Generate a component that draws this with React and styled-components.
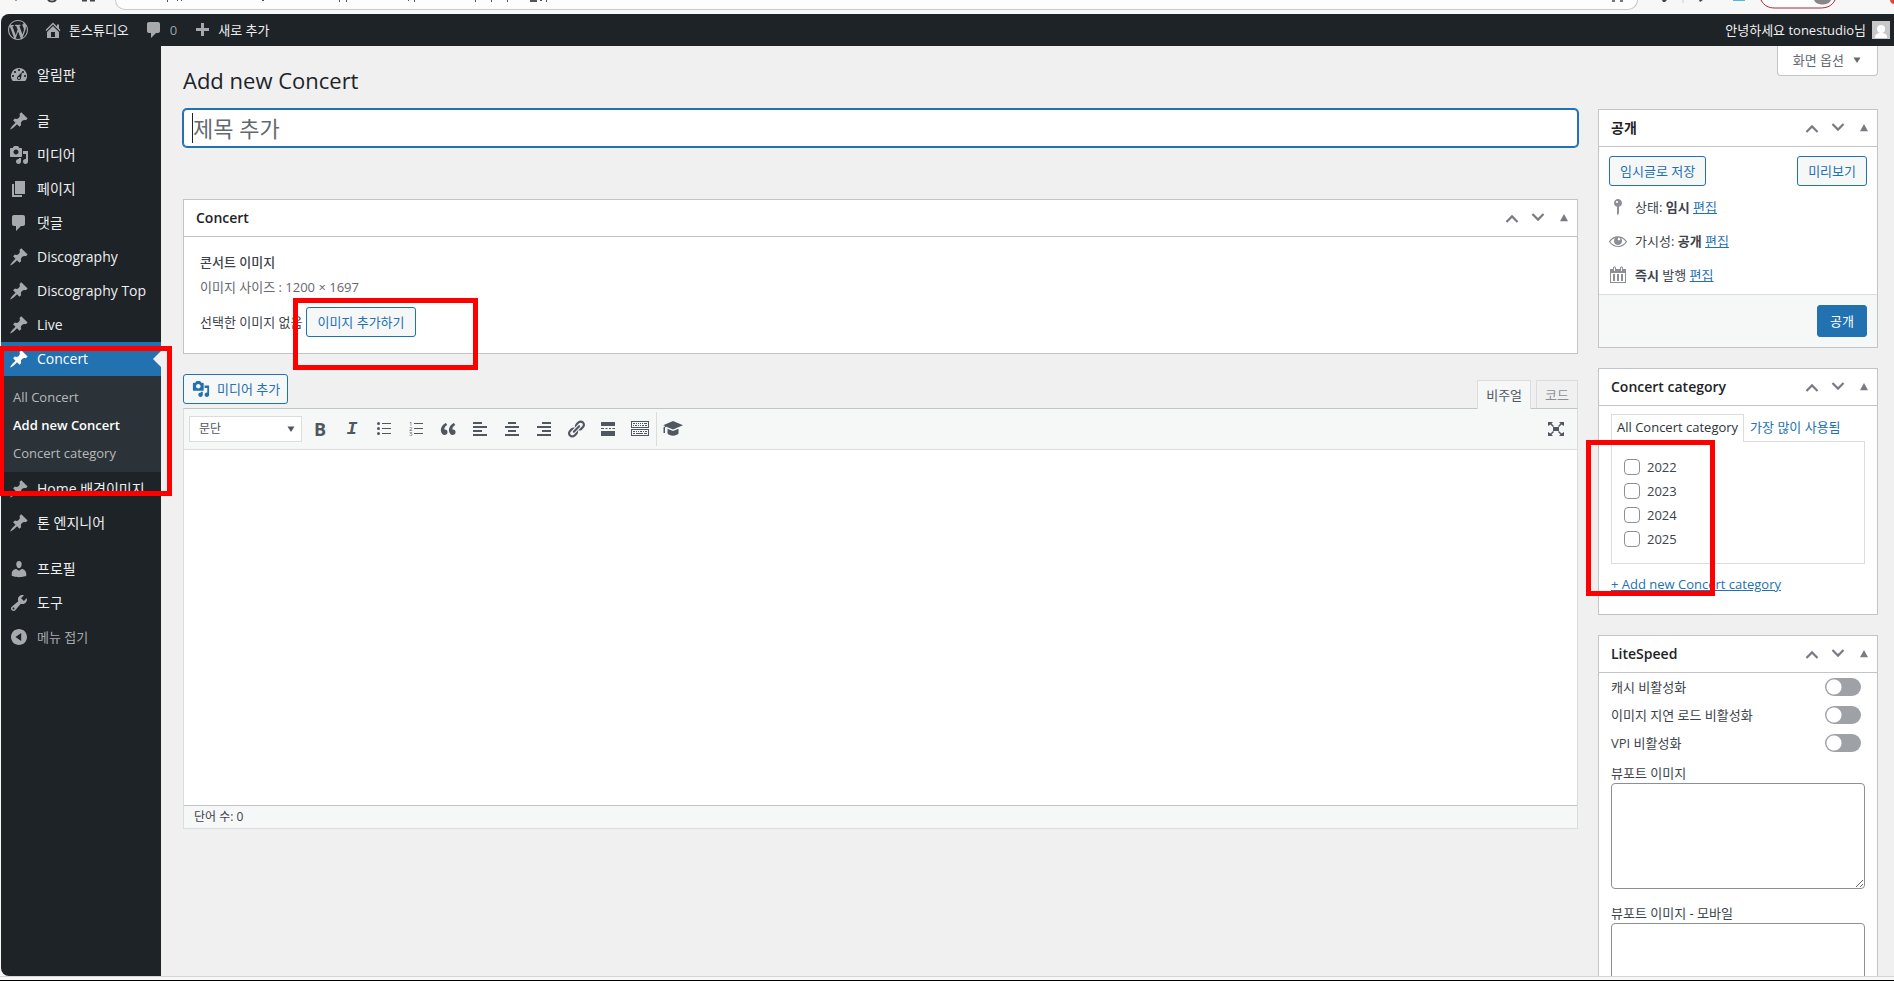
import React from 'react';
import styled, { createGlobalStyle, css } from 'styled-components';

const PATHS = {
    wordpress: 'M20 10c0-5.51-4.49-10-10-10C4.48 0 0 4.49 0 10c0 5.52 4.48 10 10 10 5.51 0 10-4.48 10-10zM7.78 15.37L4.37 6.22c.55-.02 1.17-.08 1.17-.08.5-.06.44-1.13-.06-1.11 0 0-1.45.11-2.37.11-.18 0-.37 0-.58-.01C4.12 2.69 6.87 1.11 10 1.11c2.33 0 4.45.87 6.05 2.34-.68-.11-1.65.39-1.65 1.58 0 .74.45 1.36.9 2.1.35.61.55 1.36.55 2.46 0 1.49-1.4 5-1.4 5l-3.03-8.37c.54-.02.82-.17.82-.17.5-.05.44-1.25-.06-1.22 0 0-1.44.12-2.38.12-.87 0-2.33-.12-2.33-.12-.5-.03-.56 1.2-.06 1.22l.92.08 1.26 3.41zM17.41 10c.24-.64.74-1.87.43-4.25.7 1.29 1.05 2.71 1.05 4.25 0 3.29-1.73 6.24-4.4 7.78.97-2.59 1.94-5.2 2.92-7.78zM6.1 18.09C3.12 16.65 1.11 13.53 1.11 10c0-1.3.23-2.48.72-3.59C3.25 10.3 4.67 14.2 6.1 18.09zm4.03-6.63l2.58 6.98c-.86.29-1.76.45-2.71.45-.79 0-1.57-.11-2.29-.33.81-2.38 1.62-4.74 2.42-7.1z',
    home: 'M16 8.5l1.53 1.53-1.06 1.06L10 4.6l-6.47 6.49-1.06-1.06L10 2.5l4 4v-2h2v4zm-6-2.46l6 5.99V18H4v-5.97zM12 17v-5H8v5h4z',
    comment: 'M5 2h9c1.1 0 2 .9 2 2v7c0 1.1-.9 2-2 2h-2l-5 5v-5H5c-1.1 0-2-.9-2-2V4c0-1.1.9-2 2-2z',
    plus: 'M17 8v3h-5v5H9v-5H4V8h5V3h3v5h5z',
    dashboard: 'M3.76 16h12.48A7.998 7.998 0 0 0 10 3a7.998 7.998 0 0 0-6.24 13zM10 4c.55 0 1 .45 1 1s-.45 1-1 1-1-.45-1-1 .45-1 1-1zM6 6c.55 0 1 .45 1 1s-.45 1-1 1-1-.45-1-1 .45-1 1-1zm8 0c.55 0 1 .45 1 1s-.45 1-1 1-1-.45-1-1 .45-1 1-1zm-5.37 5.55L13 7l-1 6c0 1.1-.9 2-2 2s-2-.9-2-2c0-.57.24-1.08.63-1.45zM4 10c.55 0 1 .45 1 1s-.45 1-1 1-1-.45-1-1 .45-1 1-1zm12 0c.55 0 1 .45 1 1s-.45 1-1 1-1-.45-1-1 .45-1 1-1zm-5 3c0-.55-.45-1-1-1s-1 .45-1 1 .45 1 1 1 1-.45 1-1z',
    pin: 'M10.44 3.02l1.82-1.82 6.36 6.35-1.83 1.82c-1.05-.68-2.48-.57-3.41.36l-.75.75c-.92.93-1.04 2.35-.35 3.41l-1.83 1.82-2.41-2.41-2.8 2.79c-.42.42-3.38 2.71-3.8 2.29s1.86-3.39 2.28-3.81l2.79-2.79L4.1 9.36l1.83-1.82c1.05.69 2.48.57 3.4-.36l.75-.75c.93-.92 1.05-2.35.36-3.41z',
    media: 'M13 11V4c0-.55-.45-1-1-1h-1.67L9 1H5L3.67 3H2c-.55 0-1 .45-1 1v7c0 .55.45 1 1 1h10c.55 0 1-.45 1-1zM7 4.5c1.38 0 2.5 1.12 2.5 2.5S8.38 9.5 7 9.5 4.5 8.38 4.5 7 5.62 4.5 7 4.5zM14 6h5v10.5c0 1.38-1.12 2.5-2.5 2.5S14 17.88 14 16.5s1.12-2.5 2.5-2.5c.17 0 .34.02.5.05V9h-3V6zm-4 8.05V13h2v3.5c0 1.38-1.12 2.5-2.5 2.5S7 17.88 7 16.5 8.12 14 9.5 14c.17 0 .34.02.5.05z',
    page: 'M6 15V2h10v13zM3 5h2v11h8v2H3z',
    user: 'M10 9.25c-2.27 0-2.73-3.44-2.73-3.44C7 4.02 7.82 2 9.97 2c2.16 0 2.98 2.02 2.71 3.81 0 0-.41 3.44-2.68 3.44zm0 2.57L12.72 10c2.39 0 4.52 2.33 4.52 4.53v2.49s-3.65 1.13-7.24 1.13c-3.65 0-7.24-1.13-7.24-1.13v-2.49c0-2.25 1.94-4.48 4.47-4.48z',
    tools: 'M16.68 9.77c-1.34 1.34-3.3 1.67-4.95.99l-5.41 6.52c-.99.99-2.59.99-3.58 0s-.99-2.59 0-3.57l6.52-5.42c-.68-1.65-.35-3.61.99-4.95 1.28-1.28 3.12-1.62 4.72-1.06l-2.89 2.89 2.82 2.82 2.86-2.87c.53 1.58.18 3.39-1.08 4.65zM3.81 16.21c.4.39 1.04.39 1.43 0 .4-.4.4-1.04 0-1.43-.39-.4-1.03-.4-1.43 0-.39.39-.39 1.03 0 1.43z',
    collapse: 'M10 2c4.42 0 8 3.58 8 8s-3.58 8-8 8-8-3.58-8-8 3.58-8 8-8zm2.2 12V6l-5.7 4z',
    status: 'M14 6c0 1.86-1.28 3.41-3 3.86V16c0 1-2 2-2 2V9.86c-1.72-.45-3-2-3-3.86 0-2.21 1.79-4 4-4s4 1.79 4 4zM8 5c0 .55.45 1 1 1s1-.45 1-1-.45-1-1-1-1 .45-1 1z',
    eye: 'M18.3 9.5C15 4.9 8.5 3.8 3.9 7.2c-1.2.9-2.2 2.1-3 3.4.2.4.5.8.8 1.2 3.3 4.6 9.6 5.6 14.2 2.4.9-.7 1.7-1.4 2.4-2.4.3-.4.5-.8.8-1.2-.3-.4-.5-.8-.8-1.1zm-8.2-2.3c.5-.5 1.3-.5 1.8 0s.5 1.3 0 1.8-1.3.5-1.8 0-.5-1.3 0-1.8zm-.1 7.7c-3.1 0-6-1.6-7.7-4.2C3.5 9 5.1 7.8 7 7.2c-.7.8-1 1.7-1 2.7 0 2.2 1.7 4.1 4 4.1 2.2 0 4.1-1.7 4.1-4v-.1c0-1-.4-2-1.1-2.7 1.9.6 3.5 1.8 4.7 3.5-1.7 2.6-4.6 4.2-7.7 4.2z',
    calendar: 'M15 4h3v14H2V4h3V3c0-.83.67-1.5 1.5-1.5S8 2.17 8 3v1h4V3c0-.83.67-1.5 1.5-1.5S15 2.17 15 3v1zM6 3v2.5a.5.5 0 0 0 1 0V3a.5.5 0 0 0-1 0zm7 0v2.5a.5.5 0 0 0 1 0V3a.5.5 0 0 0-1 0zm4 14V8H3v9h14zM7 16V9H5v7h2zm4 0V9H9v7h2zm4 0V9h-2v7h2z',
    quote: 'M9.49 13.22c0-.74-.2-1.38-.61-1.9-.62-.78-1.83-.88-2.53-.72-.29-1.65 1.11-3.75 2.92-4.65L7.88 4c-2.73 1.3-5.42 4.28-4.96 8.05C3.21 14.43 4.59 16 6.54 16c.85 0 1.56-.25 2.12-.75s.83-1.18.83-2.03zm8.05 0c0-.74-.2-1.38-.61-1.9-.63-.78-1.83-.88-2.53-.72-.29-1.65 1.11-3.75 2.92-4.65L15.93 4c-2.73 1.3-5.41 4.28-4.95 8.05.29 2.38 1.66 3.95 3.61 3.95.85 0 1.56-.25 2.12-.75s.83-1.18.83-2.03z',
    bullets: 'M3 4.5a1.500 1.500 0 1 1 3 0 1.500 1.500 0 1 1-3 0zM8 4h9v1H8zM3 9.500a1.500 1.500 0 1 1 3 0 1.500 1.500 0 1 1-3 0zM8 9h9v1H8zM3 14.500a1.500 1.500 0 1 1 3 0 1.500 1.500 0 1 1-3 0zM8 14h9v1H8z',
    alignLeft: 'M12 5V3H3v2h9zm5 4V7H3v2h14zm-5 4v-2H3v2h9zm5 4v-2H3v2h14z',
    alignCenter: 'M14 5V3H6v2h8zm3 4V7H3v2h14zm-3 4v-2H6v2h8zm3 4v-2H3v2h14z',
    alignRight: 'M17 5V3H8v2h9zm0 4V7H3v2h14zm0 4v-2H8v2h9zm0 4v-2H3v2h14z',
    link: 'M17.74 2.76c1.68 1.69 1.68 4.41 0 6.1l-1.53 1.52c-1.12 1.12-2.7 1.47-4.14 1.09l2.62-2.61.76-.77.76-.76c.84-.84.84-2.2 0-3.04-.84-.85-2.2-.85-3.04 0l-.77.76-3.38 3.38c-.37-1.44-.02-3.02 1.1-4.14l1.52-1.53c1.69-1.68 4.42-1.68 6.1 0zM8.59 13.43l5.34-5.34c.42-.42.42-1.1 0-1.52-.44-.43-1.13-.39-1.53 0l-5.33 5.34c-.42.42-.42 1.1 0 1.52.44.43 1.13.39 1.52 0zm-.76 2.29l4.14-4.15c.38 1.44.03 3.02-1.09 4.14l-1.52 1.53c-1.69 1.68-4.41 1.68-6.1 0-1.68-1.68-1.68-4.42 0-6.1l1.53-1.52c1.12-1.12 2.7-1.47 4.14-1.1l-4.14 4.15c-.85.84-.85 2.2 0 3.05.84.84 2.2.84 3.04 0z',
    more: 'M3 3h14v4H3zM3 9h3v1H3zM7.500 9h2v1h-2zM11 9h2v1h-2zM14.500 9H17v1h-2.500zM3 12h14v5H3z',
    keyboard: 'M1 2h18v7H1zm1 1v5h16V3zM1 10h18v7H1zm1 1v5h16v-5zM3 4h2v1H3zM6 4h1v1H6zM8 4h1v1H8zM10 4h1v1h-1zM12 4h1v1h-1zM14 4h3v1h-3zM3 6h1v1H3zM5 6h2v1H5zM8 6h1v1H8zM10 6h1v1h-1zM12 6h2v1h-2zM15 6h2v1h-2zM3 12h2v1H3zM6 12h1v1H6zM8 12h1v1H8zM10 12h2v1h-2zM13 12h1v1h-1zM15 12h2v1h-2zM3 14h2v1H3zM6 14h7v1H6zM14 14h3v1h-3z',
    cap: 'M10 2l10 4.200-10 4.300-6.600-2.800L2 8.500V14H.500V8.500L2.400 6.900.200 6.200zM4.500 9.800L10 12.100l5.500-2.300v4.700c-1.200 1.400-3.100 2.200-5.500 2.200s-4.300-.8-5.500-2.200z',
    expand: 'M7 8h6v4H7zM2 3h5L5.500 4.500 8 7 7 8 4.500 5.500 2 7zM18 3v4l-2.500-1.500L13 8l-1-1 2.500-2.500L13 3zM2 17v-4l2.500 1.500L7 12l1 1-2.500 2.500L7 17zM18 17h-5l1.500-1.500L12 13l1-1 2.500 2.500L18 13z',
    up: 'M3 13.500l7-7 7 7-1.700 1.700L10 9.900l-5.300 5.300z',
    down: 'M3 6.500l7 7 7-7-1.700-1.700L10 10.100 4.700 4.800z',
    triUp: 'M5 14l5-9 5 9z',
    triDown: 'M3 5h14l-7 11z',
};

const Icon = ({ name, size = 20 }) => (
    <svg width={size} height={size} viewBox="0 0 20 20" fill="currentColor" fillRule="evenodd" aria-hidden="true">
        <path d={PATHS[name]} />
    </svg>
);

const NumberedIcon = () => (
    <svg width="20" height="20" viewBox="0 0 20 20" fill="currentColor" aria-hidden="true">
        <path d="M8 4h9v1H8zM8 9h9v1H8zM8 14h9v1H8z" />
        <text x="3" y="7" fontSize="6">1</text>
        <text x="3" y="12" fontSize="6">2</text>
        <text x="3" y="17" fontSize="6">3</text>
    </svg>
);

const MENU = [
    { icon: 'dashboard', label: '알림판' },
    { icon: 'pin', label: '글', separated: true },
    { icon: 'media', label: '미디어' },
    { icon: 'page', label: '페이지' },
    { icon: 'comment', label: '댓글' },
    { icon: 'pin', label: 'Discography' },
    { icon: 'pin', label: 'Discography Top' },
    { icon: 'pin', label: 'Live' },
    { icon: 'pin', label: 'Concert', current: true, children: ['All Concert', 'Add new Concert', 'Concert category'] },
    { icon: 'pin', label: 'Home 배경이미지' },
    { icon: 'pin', label: '톤 엔지니어' },
    { icon: 'user', label: '프로필', separated: true },
    { icon: 'tools', label: '도구' },
];

const TOOLS = [
    { label: '굵게', glyph: <BoldGlyph /> },
    { label: '기울임꼴', glyph: <ItalicGlyph /> },
    { label: '글머리 기호 목록', icon: 'bullets' },
    { label: '번호 목록', glyph: <NumberedIcon /> },
    { label: '인용', icon: 'quote' },
    { label: '왼쪽 정렬', icon: 'alignLeft' },
    { label: '가운데 정렬', icon: 'alignCenter' },
    { label: '오른쪽 정렬', icon: 'alignRight' },
    { label: '링크', icon: 'link' },
    { label: '더보기 태그', icon: 'more' },
    { label: '툴바 전환', icon: 'keyboard' },
];

function BoldGlyph() {
    return <Letter>B</Letter>;
}

function ItalicGlyph() {
    return <Letter $italic>I</Letter>;
}

const Postbox = ({ title, children }) => (
    <Box>
        <BoxHeader>
            <h2>{title}</h2>
            <div>
                <button type="button" aria-label={`${title} 위로 이동`}><Icon name="up" size={18} /></button>
                <button type="button" aria-label={`${title} 아래로 이동`}><Icon name="down" size={18} /></button>
                <button type="button" aria-label={`${title} 패널 토글`}><Icon name="triUp" size={16} /></button>
            </div>
        </BoxHeader>
        {children}
    </Box>
);

const BrowserBar = () => (
    <Browser>
        <svg width="115" height="14" viewBox="0 0 115 14" fill="none" stroke="#444" aria-hidden="true">
            <path d="M48 0c2 2 6 2 8 0M82 .500h5M90 .500h5" strokeWidth="2" />
            <path d="M15 0h2" />
        </svg>
        <Address>
            <svg width="460" height="3" viewBox="0 0 460 3" fill="#555" aria-hidden="true">
                <path d="M51 0h1v2h-1zM61 0h1v1h-1zM65 0h1v1h-1zM146 0h2v1h-2zM223 0h1v2h-1zM230 0h1v2h-1zM292 0h1v1h-1zM298 0h1v2h-1zM359 0h1v2h-1zM375 0h1v2h-1zM391 0h1v2h-1zM414 0h7v2h-7zM424 0h2v1h-2zM430 0h1v2h-1z" />
            </svg>
            <svg width="14" height="3" viewBox="0 0 14 3" fill="#777" aria-hidden="true">
                <path d="M1 0h3v2H1zM9 0h3v2H9z" />
            </svg>
        </Address>
        <svg width="256" height="14" viewBox="0 0 256 14" aria-hidden="true">
            <path d="M24 0h5l-2 2h-2zM61 0h4l-3 2z" fill="#444" />
            <path d="M45 0v3" stroke="#ccc" />
            <path d="M95 0h12v1H95z" fill="#4cbbe0" />
            <path d="M123 0c3 6 8 8 14 8h45c7 0 12-2 15-8" fill="#fdfdfd" stroke="#b32638" />
            <path d="M176 0h17c-2 6-15 6-17 0z" fill="#8b8585" />
            <path d="M252 0h4v4c-2 0-4-2-4-4z" fill="#e8452c" />
        </svg>
    </Browser>
);

export default function App() {
    return (
        <Screen>
            <GlobalStyle />
            <BrowserBar />
            <Admin>
                <AdminBar>
                    <BarLink href="#about" aria-label="WordPress"><Icon name="wordpress" /></BarLink>
                    <BarLink href="#site"><Icon name="home" />톤스튜디오</BarLink>
                    <BarLink href="#comments" $muted><Icon name="comment" />0</BarLink>
                    <BarLink href="#new"><Icon name="plus" />새로 추가</BarLink>
                    <Account href="#profile">
                        안녕하세요 tonestudio님
                        <svg width="18" height="18" viewBox="0 0 18 18" aria-hidden="true">
                            <path d="M0 0h18v18H0z" fill="#c8c8c8" />
                            <circle cx="9" cy="8" r="4" fill="#fff" />
                            <path d="M3 17c0-4 2-5 6-5s6 1 6 5z" fill="#fff" />
                        </svg>
                    </Account>
                </AdminBar>
                <Body>
                    <Sidebar aria-label="주 메뉴">
                        {MENU.map((item) => (
                            <React.Fragment key={item.label}>
                                <MenuLink href="#menu" $current={item.current} $separated={item.separated}>
                                    <Icon name={item.icon} />
                                    <span>{item.label}</span>
                                </MenuLink>
                                {item.children && (
                                    <Submenu>
                                        {item.children.map((child) => (
                                            <SubLink href="#submenu" key={child} $active={child === 'Add new Concert'}>{child}</SubLink>
                                        ))}
                                    </Submenu>
                                )}
                            </React.Fragment>
                        ))}
                        <CollapseButton type="button"><Icon name="collapse" /><span>메뉴 접기</span></CollapseButton>
                    </Sidebar>

                    <Content>
                        <PageHeader>
                            <h1>Add new Concert</h1>
                            <ScreenOptions type="button">화면 옵션 <Icon name="triDown" size={10} /></ScreenOptions>
                        </PageHeader>
                        <Columns>
                            <MainColumn>
                                <TitleField>
                                    <Caret />
                                    <input type="text" aria-label="제목 추가" placeholder="제목 추가" />
                                </TitleField>
                                <Postbox title="Concert">
                                    <ImageField>
                                        <strong>콘서트 이미지</strong>
                                        <p>이미지 사이즈 : 1200 × 1697</p>
                                        <div>선택한 이미지 없음 <Button type="button">이미지 추가하기</Button></div>
                                    </ImageField>
                                </Postbox>
                                <EditorTop>
                                    <Button type="button" $withIcon><Icon name="media" size={18} />미디어 추가</Button>
                                    <EditorTabs>
                                        <EditorTab type="button" $active>비주얼</EditorTab>
                                        <EditorTab type="button">코드</EditorTab>
                                    </EditorTabs>
                                </EditorTop>
                                <Editor>
                                    <Toolbar>
                                        <FormatSelect>
                                            <select aria-label="문단 형식"><option>문단</option></select>
                                            <Icon name="triDown" size={10} />
                                        </FormatSelect>
                                        <ToolGroup>
                                            {TOOLS.map((tool) => (
                                                <ToolButton type="button" key={tool.label} aria-label={tool.label}>
                                                    {tool.glyph || <Icon name={tool.icon} />}
                                                </ToolButton>
                                            ))}
                                        </ToolGroup>
                                        <LastTools>
                                            <ToolButton type="button" aria-label="강의"><Icon name="cap" /></ToolButton>
                                            <ToolButton type="button" aria-label="전체 화면"><Icon name="expand" /></ToolButton>
                                        </LastTools>
                                    </Toolbar>
                                    <EditorArea aria-label="본문" />
                                    <StatusBar>단어 수: 0</StatusBar>
                                </Editor>
                            </MainColumn>

                            <SideColumn>
                                <Postbox title="공개">
                                    <PublishActions>
                                        <Button type="button">임시글로 저장</Button>
                                        <Button type="button">미리보기</Button>
                                    </PublishActions>
                                    <PublishRow><Icon name="status" /><span>상태: <b>임시</b> <a href="#status">편집</a></span></PublishRow>
                                    <PublishRow><Icon name="eye" /><span>가시성: <b>공개</b> <a href="#visibility">편집</a></span></PublishRow>
                                    <PublishRow><Icon name="calendar" /><span><b>즉시</b> 발행 <a href="#date">편집</a></span></PublishRow>
                                    <PublishFooter>
                                        <Button type="submit" $primary>공개</Button>
                                    </PublishFooter>
                                </Postbox>
                                <Postbox title="Concert category">
                                    <CategoryBody>
                                        <CategoryTabs>
                                            <CategoryTab href="#all" $active>All Concert category</CategoryTab>
                                            <CategoryTab href="#popular">가장 많이 사용됨</CategoryTab>
                                        </CategoryTabs>
                                        <CategoryPanel>
                                            {['2022', '2023', '2024', '2025'].map((year) => (
                                                <label key={year}><input type="checkbox" />{year}</label>
                                            ))}
                                        </CategoryPanel>
                                        <AddLink href="#add">+ Add new Concert category</AddLink>
                                    </CategoryBody>
                                </Postbox>
                                <Postbox title="LiteSpeed">
                                    <LiteSpeedBody>
                                        {['캐시 비활성화', '이미지 지연 로드 비활성화', 'VPI 비활성화'].map((text) => (
                                            <SwitchRow key={text}>{text}<input type="checkbox" role="switch" /></SwitchRow>
                                        ))}
                                        <AreaField>뷰포트 이미지<textarea /></AreaField>
                                        <AreaField>뷰포트 이미지 - 모바일<textarea /></AreaField>
                                    </LiteSpeedBody>
                                </Postbox>
                            </SideColumn>
                        </Columns>
                    </Content>
                </Body>
            </Admin>
            <BottomEdge />
            <Marker $left={-1} $top={346} $width={173} $height={150} />
            <Marker $left={293} $top={298} $width={185} $height={72} />
            <Marker $left={1586} $top={440} $width={129} $height={156} />
        </Screen>
    );
}

const GlobalStyle = createGlobalStyle`
    *{
        box-sizing: border-box;
    }
    body{
        margin: 0;
        overflow: hidden;
        background: #F7F7F7;
        color: #3C434A;
        font-family: "Open Sans", "Noto Sans CJK KR", sans-serif;
        font-size: 13px;
        line-height: 20px;
    }
    button, input, select, textarea{
        font: inherit;
    }
    svg{
        display: block;
        flex: none;
    }
    h1, h2, p{
        margin: 0;
    }
    a{
        color: #2271B1;
    }
`;

const Screen = styled.div`
    position: relative;
    height: 100vh;
    display: flex;
    flex-direction: column;
    overflow: hidden;
`;

const Browser = styled.div`
    height: 14px;
    flex: none;
    display: flex;
    background: #F7F7F7;
`;

const Address = styled.div`
    flex: 1;
    height: 10px;
    display: flex;
    justify-content: space-between;
    padding-right: 12px;
    background: #FDFDFD;
    border: 1px solid #C9C9C9;
    border-top: none;
    border-radius: 0 0 14px 14px;
`;

const Admin = styled.div`
    flex: 1;
    min-height: 0;
    margin-left: 1px;
    display: flex;
    flex-direction: column;
    overflow: hidden;
    background: #F0F0F1;
    border-radius: 8px 0 0 8px;
`;

const AdminBar = styled.header`
    height: 32px;
    flex: none;
    display: flex;
    gap: 15px;
    padding: 0 4px 0 7px;
    background: #1D2327;
`;

const BarLink = styled.a`
    display: flex;
    align-items: center;
    gap: 6px;
    color: ${({ $muted }) => ($muted ? '#9CA2A7' : '#F0F0F1')};
    text-decoration: none;
    svg{
        color: #A7AAAD;
    }
`;

const Account = styled(BarLink)`
    margin-left: auto;
`;

const Body = styled.div`
    flex: 1;
    min-height: 0;
    display: flex;
`;

const Sidebar = styled.nav`
    width: 160px;
    flex: none;
    padding-top: 12px;
    background: #1D2327;
`;

const menuItem = css`
    width: 100%;
    height: 34px;
    display: flex;
    align-items: center;
    gap: 8px;
    padding: 0 8px;
    color: #F0F0F1;
    font-size: 14px;
    text-decoration: none;
    white-space: nowrap;
    svg{
        color: #A7AAAD;
    }
`;

const MenuLink = styled.a`
    ${menuItem}
    margin-top: ${({ $separated }) => ($separated ? '12px' : '0')};
    ${({ $current }) => $current && css`
        position: relative;
        background: #2271B1;
        color: #FFFFFF;
        svg{
            color: #FFFFFF;
        }
        &::after{
            content: '';
            position: absolute;
            right: 0;
            top: 9px;
            border: 8px solid transparent;
            border-left: none;
            border-right-color: #F0F0F1;
        }
    `}
`;

const CollapseButton = styled.button`
    ${menuItem}
    border: none;
    background: none;
    color: #A7AAAD;
    font-size: 13px;
`;

const Submenu = styled.div`
    padding: 7px 0 5px;
    background: #2C3338;
`;

const SubLink = styled.a`
    display: block;
    padding: 0 12px;
    line-height: 28px;
    color: ${({ $active }) => ($active ? '#FFFFFF' : '#B7BABD')};
    font-weight: ${({ $active }) => ($active ? 600 : 400)};
    text-decoration: none;
`;

const Content = styled.main`
    flex: 1;
    min-width: 0;
    padding: 0 16px 0 22px;
`;

const PageHeader = styled.div`
    height: 63px;
    display: flex;
    justify-content: space-between;
    align-items: flex-start;
    h1{
        margin-top: 19px;
        color: #1D2327;
        font-size: 22px;
        font-weight: 400;
        line-height: 30px;
    }
`;

const ScreenOptions = styled.button`
    height: 30px;
    display: flex;
    align-items: center;
    gap: 8px;
    padding: 0 15px 2px;
    border: 1px solid #C3C4C7;
    border-top: none;
    border-radius: 0 0 4px 4px;
    background: #FFFFFF;
    color: #646970;
`;

const Columns = styled.div`
    display: flex;
    gap: 20px;
`;

const MainColumn = styled.div`
    flex: 1;
    min-width: 0;
`;

const SideColumn = styled.div`
    width: 280px;
    flex: none;
    display: flex;
    flex-direction: column;
    gap: 20px;
`;

const TitleField = styled.div`
    position: relative;
    margin-bottom: 52px;
    input{
        display: block;
        width: 100%;
        height: 38px;
        padding: 0 9px;
        border: 1px solid #2271B1;
        border-radius: 4px;
        outline: none;
        box-shadow: 0 0 0 1px #2271B1;
        background: #FFFFFF;
        font-size: 22px;
        &::placeholder{
            color: #646970;
        }
    }
`;

const Caret = styled.span`
    position: absolute;
    left: 9px;
    top: 4px;
    width: 1px;
    height: 30px;
    background: #1D2327;
`;

const Box = styled.section`
    border: 1px solid #C3C4C7;
    background: #FFFFFF;
`;

const BoxHeader = styled.div`
    height: 37px;
    display: flex;
    align-items: center;
    justify-content: space-between;
    padding-left: 12px;
    border-bottom: 1px solid #C3C4C7;
    h2{
        color: #1D2327;
        font-size: 14px;
        font-weight: 600;
    }
    div{
        display: flex;
    }
    button{
        width: 26px;
        height: 36px;
        display: grid;
        place-items: center;
        padding: 0;
        border: none;
        background: none;
        color: #787C82;
    }
`;

const Button = styled.button`
    height: ${({ $primary }) => ($primary ? '32px' : '30px')};
    display: inline-flex;
    align-items: center;
    gap: 7px;
    padding: ${({ $withIcon, $primary }) => {
        if ($withIcon) return '0 7px 0 8px';
        return $primary ? '0 12px' : '0 10px';
    }};
    border: 1px solid #2271B1;
    border-radius: 3px;
    background: ${({ $primary }) => ($primary ? '#2271B1' : '#F6F7F7')};
    color: ${({ $primary }) => ($primary ? '#FFFFFF' : '#2271B1')};
    white-space: nowrap;
`;

const ImageField = styled.div`
    padding: 15px 16px 16px;
    strong{
        display: block;
        font-weight: 500;
    }
    p{
        margin: 5px 0 10px;
        color: #646970;
    }
    div{
        display: flex;
        align-items: center;
        gap: 4px;
    }
`;

const EditorTop = styled.div`
    height: 34px;
    display: flex;
    justify-content: space-between;
    align-items: flex-start;
    margin-top: 20px;
`;

const EditorTabs = styled.div`
    display: flex;
    align-self: flex-end;
    gap: 5px;
`;

const EditorTab = styled.button`
    position: relative;
    height: 28px;
    padding: 0 8px;
    border: 1px solid #DCDCDE;
    border-bottom: none;
    background: ${({ $active }) => ($active ? '#F6F7F7' : '#F0F0F1')};
    color: ${({ $active }) => ($active ? '#50575E' : '#8C8F94')};
    ${({ $active }) => $active && css`
        height: 29px;
        margin-bottom: -1px;
    `}
`;

const Editor = styled.div`
    border: 1px solid #DCDCDE;
    border-top-color: #C3C4C7;
    background: #FFFFFF;
`;

const Toolbar = styled.div`
    height: 41px;
    display: flex;
    align-items: center;
    padding-left: 5px;
    border-bottom: 1px solid #DCDCDE;
    background: #F6F7F7;
    color: #50575E;
`;

const FormatSelect = styled.div`
    width: 113px;
    height: 26px;
    display: flex;
    align-items: center;
    padding-right: 5px;
    border: 1px solid #DCDCDE;
    background: #FFFFFF;
    select{
        flex: 1;
        height: 24px;
        padding: 0 9px;
        appearance: none;
        border: none;
        background: none;
        color: #50575E;
        font-size: 12px;
    }
`;

const ToolGroup = styled.div`
    height: 34px;
    display: flex;
    align-items: center;
    gap: 4px;
    padding: 0 2px 0 4px;
    border-right: 1px solid #DCDCDE;
`;

const LastTools = styled.div`
    flex: 1;
    display: flex;
    justify-content: space-between;
    padding: 0 7px 0 2px;
`;

const ToolButton = styled.button`
    width: 28px;
    height: 28px;
    display: grid;
    place-items: center;
    padding: 0;
    border: none;
    background: none;
    color: #50575E;
`;

const Letter = styled.span`
    font-family: ${({ $italic }) => ($italic ? '"Liberation Mono", monospace' : '"Open Sans", sans-serif')};
    font-size: 18px;
    font-style: ${({ $italic }) => ($italic ? 'italic' : 'normal')};
    font-weight: 700;
`;

const EditorArea = styled.textarea`
    display: block;
    width: 100%;
    height: 355px;
    border: none;
    resize: none;
`;

const StatusBar = styled.div`
    height: 23px;
    padding: 0 10px;
    border-top: 1px solid #C3C4C7;
    background: #F6F7F7;
    font-size: 12px;
    line-height: 22px;
`;

const PublishActions = styled.div`
    display: flex;
    justify-content: space-between;
    padding: 9px 10px 4px;
`;

const PublishRow = styled.div`
    height: 34px;
    display: flex;
    align-items: center;
    gap: 7px;
    padding: 0 9px;
    svg{
        color: #8C8F94;
    }
    b{
        font-weight: 600;
    }
`;

const PublishFooter = styled.div`
    display: flex;
    justify-content: flex-end;
    margin-top: 2px;
    padding: 10px;
    border-top: 1px solid #DCDCDE;
    background: #F6F7F7;
`;

const CategoryBody = styled.div`
    padding: 8px 12px 20px;
`;

const CategoryTabs = styled.div`
    display: flex;
`;

const CategoryTab = styled.a`
    height: ${({ $active }) => ($active ? '28px' : '26px')};
    padding: 0 5px;
    border: 1px solid ${({ $active }) => ($active ? '#DCDCDE' : 'transparent')};
    border-bottom: none;
    margin-bottom: -1px;
    background: #FFFFFF;
    color: ${({ $active }) => ($active ? '#2C3338' : '#2271B1')};
    line-height: 24px;
    text-decoration: none;
    white-space: nowrap;
    z-index: 1;
`;

const CategoryPanel = styled.div`
    display: flex;
    flex-direction: column;
    gap: 4px;
    padding: 15px 12px 14px;
    border: 1px solid #DCDCDE;
    label{
        height: 20px;
        display: flex;
        align-items: center;
        gap: 7px;
    }
    input{
        width: 16px;
        height: 16px;
        margin: 0;
        appearance: none;
        border: 1px solid #8C8F94;
        border-radius: 4px;
        background: #FFFFFF;
    }
`;

const AddLink = styled.a`
    display: block;
    width: fit-content;
    margin-top: 10px;
    font-weight: 500;
`;

const LiteSpeedBody = styled.div`
    padding: 0 12px;
`;

const SwitchRow = styled.label`
    height: 28px;
    display: flex;
    align-items: center;
    justify-content: space-between;
    padding-right: 4px;
    input{
        width: 36px;
        height: 18px;
        margin: 0;
        appearance: none;
        border-radius: 9px;
        background: radial-gradient(circle at 9px 9px, #FFFFFF 7px, #9EA1A5 8px);
    }
`;

const AreaField = styled.label`
    display: block;
    padding-top: 6px;
    textarea{
        display: block;
        width: 100%;
        height: 106px;
        margin-bottom: 8px;
        border: 1px solid #8C8F94;
        border-radius: 4px;
        background: #FFFFFF;
    }
`;

const BottomEdge = styled.div`
    height: 5px;
    flex: none;
    background: #F7F7F7;
    border-top: 1px solid #D5D5D5;
    border-bottom: 1px solid #000000;
`;

const Marker = styled.div`
    position: absolute;
    left: ${({ $left }) => $left}px;
    top: ${({ $top }) => $top}px;
    width: ${({ $width }) => $width}px;
    height: ${({ $height }) => $height}px;
    border: 5px solid #FF0000;
    pointer-events: none;
    z-index: 2;
`;
